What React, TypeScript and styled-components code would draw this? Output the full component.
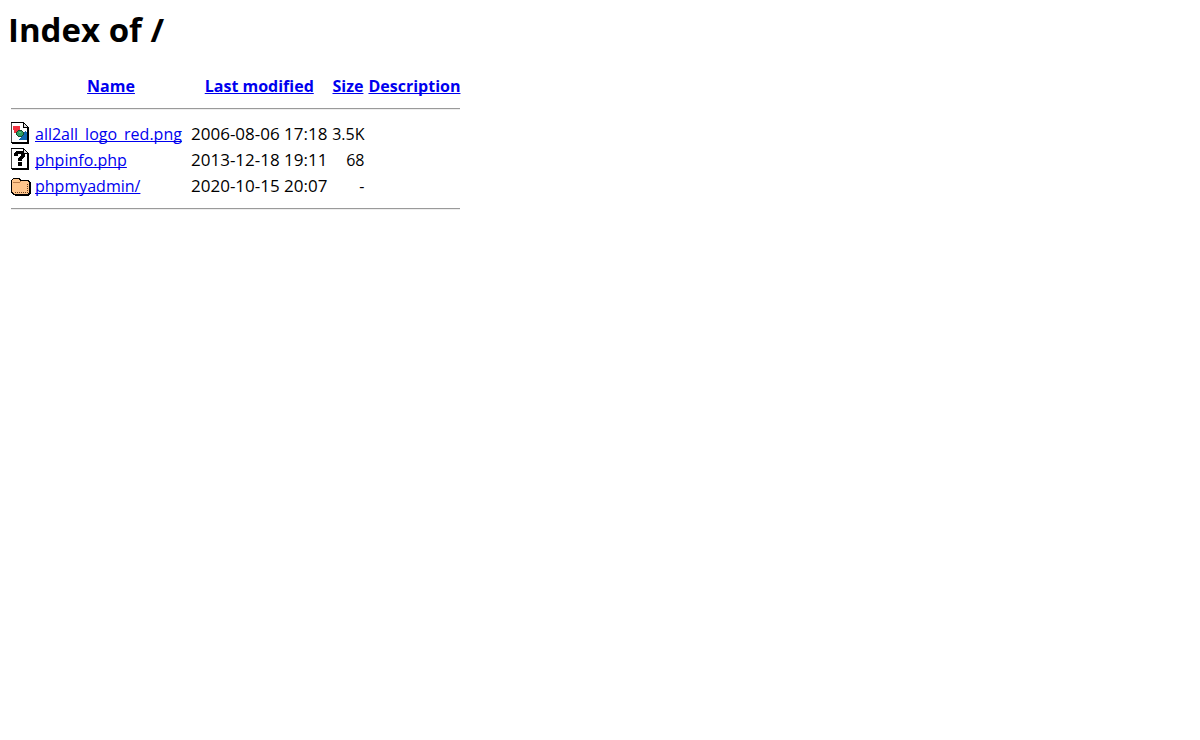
import React from "react";
import styled, { createGlobalStyle } from "styled-components";

const GlobalStyle = createGlobalStyle`
  body {
    margin: 8px;
    background: #fff;
    color: #000;
    font-family: "Open Sans", "Noto Sans", sans-serif;
    font-size: 16px;
    line-height: 22px;
  }
`;

const Title = styled.h1`
  margin: 0;
  padding: 1px 0 20px;
  font-size: 33px;
  line-height: 42px;
  font-weight: 700;
`;

const Listing = styled.table`
  border-spacing: 2px;
  border-collapse: separate;
`;

const Column = styled.col<{ $width: number }>`
  width: ${(p) => p.$width}px;
`;

const HeadCell = styled.th`
  padding: 2px 1px 0;
  text-align: center;
  white-space: nowrap;
`;

const Cell = styled.td<{ $align?: "left" | "right" }>`
  padding: 2px 1px 0;
  text-align: ${(p) => p.$align ?? "left"};
  vertical-align: top;
  white-space: nowrap;
`;

const IconCell = styled.td`
  padding: 1px;
`;

const DateCell = styled(Cell)`
  font-size: 17px;
`;

const RuleCell = styled.td`
  padding: 1px;
`;

const Rule = styled.hr`
  margin: 8px 0;
  height: 0;
  border: 0;
  border-top: 1px solid #9a9a9a;
  border-bottom: 1px solid #eee;
`;

const Link = styled.a`
  color: #0000ee;
  text-decoration: underline;
  text-decoration-skip-ink: none;
`;

const Icon = styled.svg`
  display: block;
  width: 20px;
  height: 22px;
`;

const Sheet = () => (
  <>
    <path d="M0 0H13V1H14V2H15V3H16V4H17V5H18V22H1V21H0Z" fill="#000" />
    <path d="M1 1H12V6H16V20H1Z" fill="#fff" />
    <path d="M13 2H14V3H15V4H16V5H13Z" fill="#ddd" />
    <path d="M0 1H1V20H0Z" fill="#444" />
  </>
);

const ImageIcon = () => (
  <Icon viewBox="0 0 20 22" shapeRendering="crispEdges" role="img" aria-label="Image">
    <Sheet />
    <path d="M2 4H9V11H3V8H2Z" fill="#f03340" />
    <path d="M14 9H15V10H16V18H8V17H9V16H10V15H11V14H12V12H13V10H14Z" fill="#1168b0" />
    <path d="M7 8H11V9H12V10H13V13H12V14H11V15H7V14H6V13H5V10H6V9H7Z" fill="#174a2c" />
    <path d="M7 9H11V10H12V13H11V14H7V13H6V10H7Z" fill="#2f9e61" />
    <path d="M8 10H10V11H8Z" fill="#63c08b" />
  </Icon>
);

const UnknownIcon = () => (
  <Icon viewBox="0 0 20 22" shapeRendering="crispEdges" role="img" aria-label="Unknown">
    <Sheet />
    <path d="M5 3H12V4H13V5H14V9H13V10H12V11H11V13H7V10H8V9H9V8H10V6H7V8H3V5H4V4H5Z" fill="#000" />
    <path d="M7 14H11V18H7Z" fill="#000" />
  </Icon>
);

const FolderIcon = () => (
  <Icon viewBox="0 0 20 22" shapeRendering="crispEdges" role="img" aria-label="Directory">
    <path d="M2 4H9V5H10V6H18V7H19V8H20V20H19V21H18V22H4V21H2V20H1V19H0V6H1V5H2Z" fill="#000" />
    <path d="M2 5H8V6H9V7H17V8H18V19H17V20H3V19H2V18H1V6H2Z" fill="#ffc58c" />
    <path d="M2 8H9V7H10V8H9V9H2Z" fill="#b87a48" />
    <path d="M4 18H5V19H4ZM6 18H7V19H6ZM8 18H9V19H8ZM10 18H11V19H10ZM12 18H13V19H12ZM14 18H15V19H14ZM16 18H17V19H16ZM16 16H17V17H16ZM16 14H17V15H16ZM16 12H17V13H16ZM16 10H17V11H16Z" fill="#6b4020" />
  </Icon>
);

const files = [
  { icon: <ImageIcon />, name: "all2all_logo_red.png", modified: "2006-08-06 17:18", size: "3.5K" },
  { icon: <UnknownIcon />, name: "phpinfo.php", modified: "2013-12-18 19:11", size: "68" },
  { icon: <FolderIcon />, name: "phpmyadmin/", modified: "2020-10-15 20:07", size: "-" },
];

const RuleRow = () => (
  <tr>
    <RuleCell colSpan={5}>
      <Rule />
    </RuleCell>
  </tr>
);

export default function App() {
  return (
    <>
      <GlobalStyle />
      <Title>Index of /</Title>
      <Listing>
        <colgroup>
          <Column $width={22} />
          <Column $width={154} />
          <Column $width={138} />
          <Column $width={35} />
          <Column $width={94} />
        </colgroup>
        <thead>
          <tr>
            <HeadCell />
            <HeadCell><Link href="#name">Name</Link></HeadCell>
            <HeadCell><Link href="#modified">Last modified</Link></HeadCell>
            <HeadCell><Link href="#size">Size</Link></HeadCell>
            <HeadCell><Link href="#description">Description</Link></HeadCell>
          </tr>
          <RuleRow />
        </thead>
        <tbody>
          {files.map((f) => (
            <tr key={f.name}>
              <IconCell>{f.icon}</IconCell>
              <Cell><Link href={`#${f.name}`}>{f.name}</Link></Cell>
              <DateCell $align="right">{f.modified}</DateCell>
              <Cell $align="right">{f.size}</Cell>
              <Cell />
            </tr>
          ))}
          <RuleRow />
        </tbody>
      </Listing>
    </>
  );
}
